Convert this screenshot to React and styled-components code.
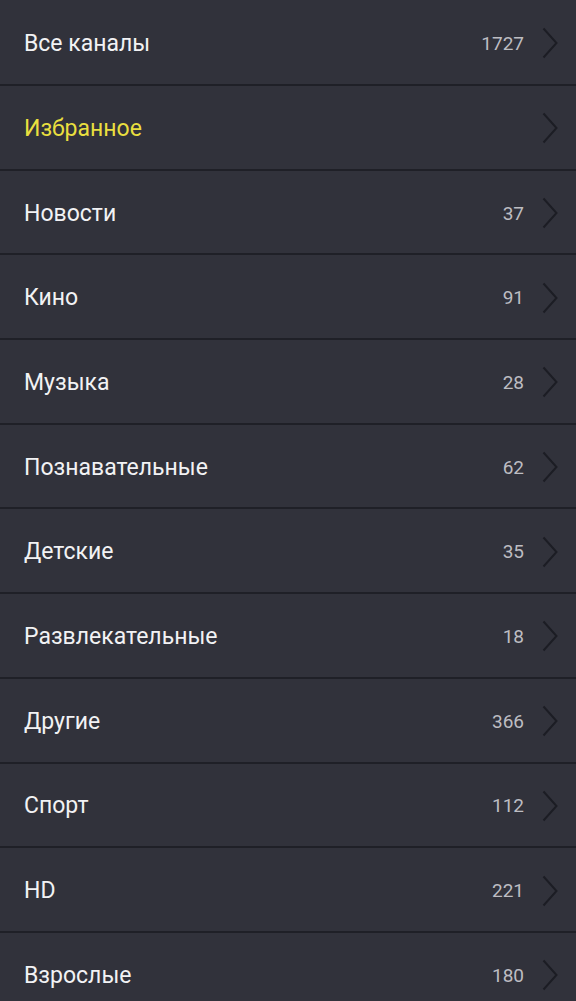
import React from "react";
import styled, { createGlobalStyle } from "styled-components";

const Global = createGlobalStyle`
  html, body { margin: 0; padding: 0; background: #31323b; }
  body { font-family: Roboto, "Noto Sans", sans-serif; }
`;

const List = styled.ul`
  list-style: none;
  margin: 0;
  padding: 0;
  background: #31323b;
  min-height: 1001px;
  box-sizing: border-box;
`;

const Row = styled.li`
  box-sizing: border-box;
  height: 84.7px;
  display: flex;
  align-items: center;
  padding: 2px 18px 0 24px;
  border-bottom: 2px solid #1f2027;
  &:first-child { height: 86px; }
`;

const Title = styled.span`
  flex: 1;
  font-size: 23px;
  color: ${(p) => (p.$accent ? "#e9df3f" : "#f2f2f4")};
`;

const Count = styled.span`
  font-size: 19px;
  color: #bdbdc2;
  margin-right: 18px;
`;

const Chevron = styled.svg`
  width: 16px;
  height: 32px;
  flex: none;
`;

const items = [
  ["Все каналы", "1727"],
  ["Избранное", "", true],
  ["Новости", "37"],
  ["Кино", "91"],
  ["Музыка", "28"],
  ["Познавательные", "62"],
  ["Детские", "35"],
  ["Развлекательные", "18"],
  ["Другие", "366"],
  ["Спорт", "112"],
  ["HD", "221"],
  ["Взрослые", "180"],
];

export default function App() {
  return (
    <>
      <Global />
      <List>
        {items.map(([t, c, a]) => (
          <Row key={t}>
            <Title $accent={a}>{t}</Title>
            {c && <Count>{c}</Count>}
            <Chevron viewBox="0 0 16 32">
              <path d="M1.5 1.5 L14.5 16 L1.5 30.5" fill="none" stroke="#1c1d24" strokeWidth="2" />
            </Chevron>
          </Row>
        ))}
      </List>
    </>
  );
}
